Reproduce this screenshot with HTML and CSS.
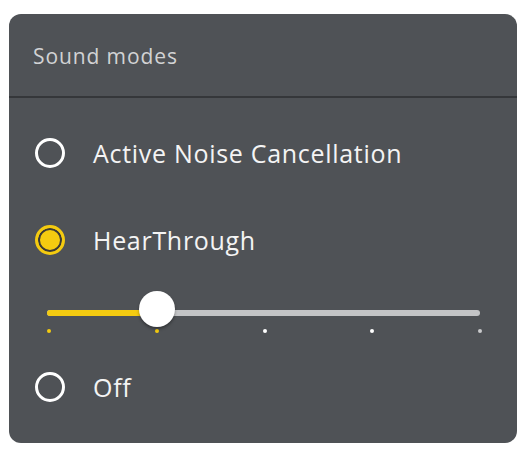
FILE: index.html
```html
<!DOCTYPE html>
<html>
<head>
<meta charset="utf-8">
<link rel="stylesheet" href="styles.css">
</head>
<body>
<div class="card">
  <div class="header">Sound modes</div>
  <div class="options">
    <div class="option">
      <span class="radio"></span>
      <span class="label">Active Noise Cancellation</span>
    </div>
    <div class="option">
      <span class="radio selected"></span>
      <span class="label">HearThrough</span>
    </div>
    <div class="slider">
      <div class="track">
        <div class="fill"></div>
        <div class="thumb"></div>
      </div>
      <div class="ticks">
        <span class="tick on"></span>
        <span class="tick on"></span>
        <span class="tick"></span>
        <span class="tick"></span>
        <span class="tick last"></span>
      </div>
    </div>
    <div class="option">
      <span class="radio"></span>
      <span class="label">Off</span>
    </div>
  </div>
</div>
</body>
</html>
```
FILE: styles.css
```css
html, body {
  margin: 0;
  padding: 0;
  background: #ffffff;
}
body {
  font-family: "Open Sans", "Noto Sans", sans-serif;
}
.card {
  margin: 14px 10px 0 9px;
  width: 508px;
  height: 429px;
  background: #4f5256;
  border-radius: 12px;
  overflow: hidden;
}
.header {
  height: 84px;
  box-sizing: border-box;
  padding-left: 24px;
  display: flex;
  align-items: center;
  padding-top: 2px;
  font-size: 21px;
  letter-spacing: 0.9px;
  color: #d2d3d4;
  border-bottom: 2px solid #35373a;
}
.options {
  padding-top: 25px;
  display: flex;
  flex-direction: column;
}
.option {
  height: 60px;
  display: flex;
  align-items: center;
  padding-left: 26px;
}
.option + .option {
  margin-top: 27px;
}
.radio {
  width: 30px;
  height: 30px;
  box-sizing: border-box;
  border: 3px solid #ffffff;
  border-radius: 50%;
  flex: none;
}
.radio.selected {
  border-color: #f4cb10;
  background: #f4cb10;
  box-shadow: inset 0 0 0 2px #3b3a35;
}
.label {
  margin-left: 28px;
  font-size: 25px;
  letter-spacing: 0.7px;
  color: #f4f4f4;
}
.slider {
  height: 80px;
  padding: 40px 37px 0 38px;
  box-sizing: border-box;
  margin-bottom: 7px;
}
.track {
  position: relative;
  height: 6px;
  border-radius: 3px;
  background: #c3c4c6;
}
.fill {
  width: 112px;
  height: 6px;
  border-radius: 3px;
  background: #f4cb10;
}
.thumb {
  position: absolute;
  left: 92px;
  top: -19px;
  width: 36px;
  height: 36px;
  border-radius: 50%;
  background: #ffffff;
  box-shadow: 0 2px 3px rgba(0, 0, 0, 0.35);
}
.ticks {
  margin-top: 13px;
  display: flex;
  justify-content: space-between;
  margin-right: -2px;
}
.tick {
  width: 4px;
  height: 4px;
  border-radius: 50%;
  background: #ffffff;
}
.tick.on {
  background: #f4cb10;
}
.tick.last {
  background: #c9cacc;
}
```
